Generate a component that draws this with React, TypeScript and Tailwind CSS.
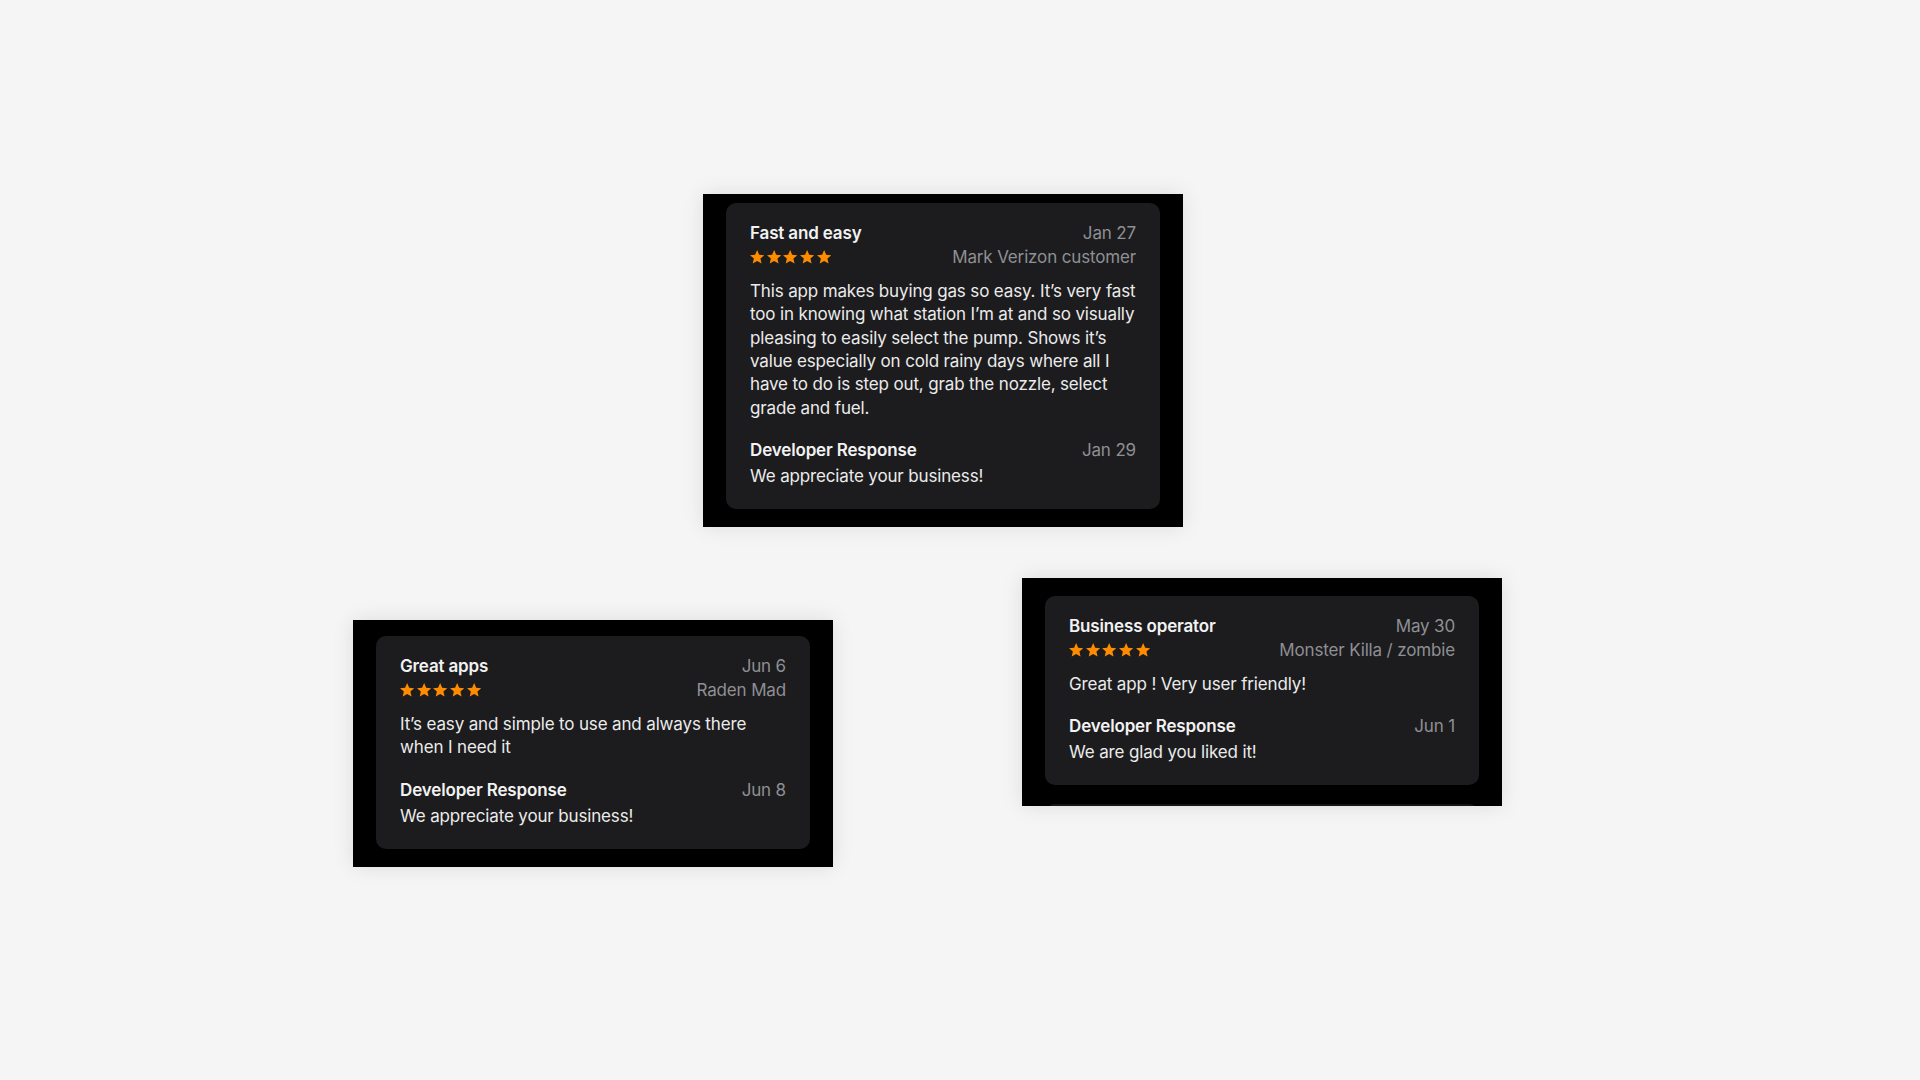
import React from "react";

const Star = () => (
  <svg width="14.3" height="13.6" viewBox="1.25 1.2 21.5 20.4" className="block">
    <path
      d="M12 1.2l3.05 7.1 7.7.68-5.84 5.07 1.75 7.53L12 17.6l-6.66 3.98 1.75-7.53L1.25 8.98l7.7-.68z"
      fill="#ff8c00"
    />
  </svg>
);

const Stars = () => (
  <div className="flex items-center gap-[2.4px]">
    <Star />
    <Star />
    <Star />
    <Star />
    <Star />
  </div>
);

type ReviewProps = {
  title: string;
  date: string;
  author: string;
  body: string;
  respDate: string;
  resp: string;
};

const Review = ({ title, date, author, body, respDate, resp }: ReviewProps) => (
  <div className="rounded-[10px] bg-[#1c1c1e] px-6 pt-[18px] pb-[21px] text-[17px] tracking-[-0.15px]">
    <div className="flex items-center justify-between leading-6">
      <span className="font-semibold text-[#f2f2f2]">{title}</span>
      <span className="text-[#8f8f94]">{date}</span>
    </div>
    <div className="flex items-center justify-between leading-6">
      <Stars />
      <span className="text-[#8f8f94]">{author}</span>
    </div>
    <p className="mt-[11px] leading-[23.33px] text-[#ebebeb]">{body}</p>
    <div className="mt-[18px] flex items-center justify-between leading-6">
      <span className="font-semibold text-[#f2f2f2]">Developer Response</span>
      <span className="text-[#8f8f94]">{respDate}</span>
    </div>
    <p className="mt-0.5 leading-6 text-[#ebebeb]">{resp}</p>
  </div>
);

export default function App() {
  return (
    <div
      className="relative h-[1080px] w-[1920px] overflow-hidden bg-[#f5f5f5]"
      style={{ fontFamily: "Inter, 'Noto Sans', sans-serif" }}
    >
      <div className="absolute left-[703px] top-[194px] h-[333px] w-[480px] bg-black px-[23px] pt-[9px] shadow-[0_0_20px_rgba(0,0,0,0.1)]">
        <Review
          title="Fast and easy"
          date="Jan 27"
          author="Mark Verizon customer"
          body="This app makes buying gas so easy. It’s very fast too in knowing what station I’m at and so visually pleasing to easily select the pump. Shows it’s value especially on cold rainy days where all I have to do is step out, grab the nozzle, select grade and fuel."
          respDate="Jan 29"
          resp="We appreciate your business!"
        />
      </div>

      <div className="absolute left-[353px] top-[620px] h-[247px] w-[480px] bg-black px-[23px] pt-4 shadow-[0_0_20px_rgba(0,0,0,0.1)]">
        <Review
          title="Great apps"
          date="Jun 6"
          author="Raden Mad"
          body="It’s easy and simple to use and always there when I need it"
          respDate="Jun 8"
          resp="We appreciate your business!"
        />
      </div>

      <div className="absolute left-[1022px] top-[578px] h-[228px] w-[480px] overflow-hidden bg-black px-[23px] pt-[18px] shadow-[0_0_20px_rgba(0,0,0,0.1)]">
        <Review
          title="Business operator"
          date="May 30"
          author="Monster Killa / zombie"
          body="Great app ! Very user friendly!"
          respDate="Jun 1"
          resp="We are glad you liked it!"
        />
        <div className="mt-[19px] h-10 rounded-[10px] bg-[#161617]" />
      </div>
    </div>
  );
}
